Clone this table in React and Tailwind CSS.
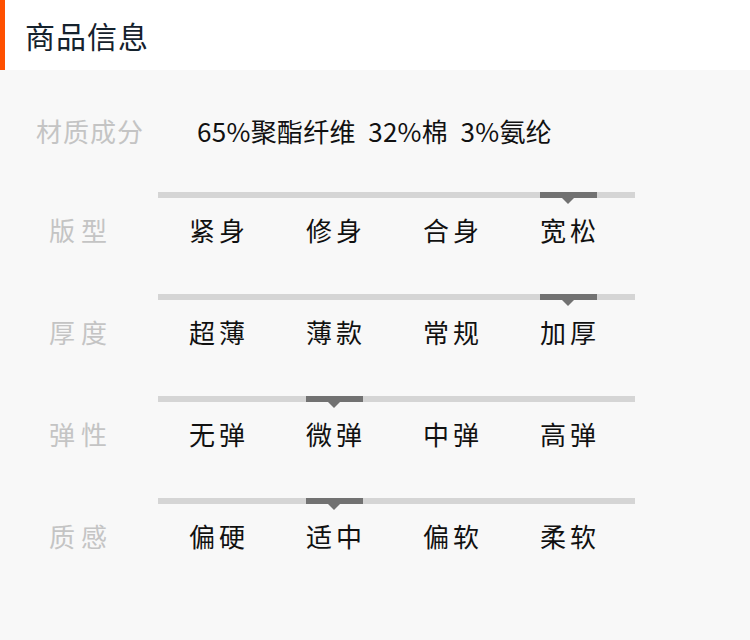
const font = { fontFamily: '"Noto Sans CJK SC", "Noto Sans", sans-serif' };

const rows = [
  { label: '版型', options: ['紧身', '修身', '合身', '宽松'], active: 3 },
  { label: '厚度', options: ['超薄', '薄款', '常规', '加厚'], active: 3 },
  { label: '弹性', options: ['无弹', '微弹', '中弹', '高弹'], active: 1 },
  { label: '质感', options: ['偏硬', '适中', '偏软', '柔软'], active: 1 },
];

function ScaleRow({ label, options, active }) {
  return (
    <div className="flex h-[102px]">
      <div className="w-[158px] pt-[24px] pl-[4px] text-center text-[26px] leading-[28px] tracking-[6px] text-[#c4c4c4]">
        {label}
      </div>
      <div className="flex flex-col">
        {/* bar */}
        <div className="flex h-[6px] w-[477px] bg-[#d5d5d5] pl-[31px]">
          {options.map((o, i) => (
            <div key={o} className="w-[117px] shrink-0">
              {i === active && (
                <div className="relative h-[6px] w-[57px] bg-[#727272]">
                  <div className="absolute left-[22px] top-[6px] h-0 w-0 border-l-[6px] border-r-[6px] border-t-[6px] border-l-transparent border-r-transparent border-t-[#727272]" />
                </div>
              )}
            </div>
          ))}
        </div>
        {/* options */}
        <div className="mt-[18px] flex pl-[31px] text-[26px] leading-[28px] tracking-[4px] text-[#111]">
          {options.map((o) => (
            <div key={o} className="w-[117px] shrink-0">{o}</div>
          ))}
        </div>
      </div>
    </div>
  );
}

export default function App() {
  return (
    <div className="h-[640px] w-[750px] bg-[#f8f8f8]" style={font}>
      {/* Header */}
      <div className="flex h-[70px] items-center bg-white">
        <div className="h-full w-[5px] bg-[#ff5000]" />
        <h1 className="ml-[20px] text-[30px] leading-none tracking-[1px] text-[#15222d]">商品信息</h1>
      </div>

      {/* Material */}
      <div className="mt-[40px] flex h-[40px] items-center">
        <div className="ml-[36px] w-[161px] text-[26px] tracking-[1px] text-[#c4c4c4]">材质成分</div>
        <div className="text-[26px] tracking-[0.3px] text-[#111]">65%聚酯纤维&nbsp; 32%棉&nbsp; 3%氨纶</div>
      </div>

      <div className="mt-[42px]">
        {rows.map((r) => (
          <ScaleRow key={r.label} {...r} />
        ))}
      </div>
    </div>
  );
}
